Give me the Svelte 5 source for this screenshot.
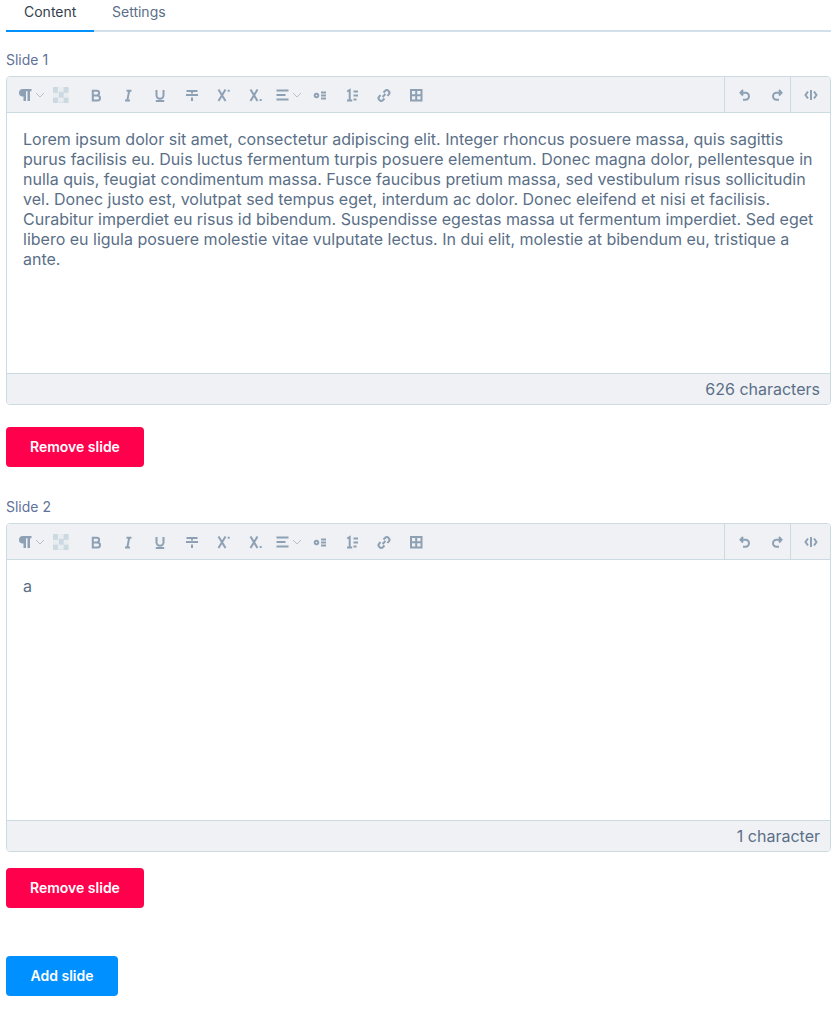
<script lang="ts">
  const lorem =
    'Lorem ipsum dolor sit amet, consectetur adipiscing elit. Integer rhoncus posuere massa, quis sagittis purus facilisis eu. Duis luctus fermentum turpis posuere elementum. Donec magna dolor, pellentesque in nulla quis, feugiat condimentum massa. Fusce faucibus pretium massa, sed vestibulum risus sollicitudin vel. Donec justo est, volutpat sed tempus eget, interdum ac dolor. Donec eleifend et nisi et facilisis. Curabitur imperdiet eu risus id bibendum. Suspendisse egestas massa ut fermentum imperdiet. Sed eget libero eu ligula posuere molestie vitae vulputate lectus. In dui elit, molestie at bibendum eu, tristique a ante.'

  const slides = [
    { label: 'Slide 1', text: lorem, count: '626 characters' },
    { label: 'Slide 2', text: 'a', count: '1 character' },
  ]

  const formatIcons = [
    'M4.800 3.800h4a2.300 2.300 0 0 1 0 4.600h-4zM4.800 8.400h4.600a2.600 2.600 0 0 1 0 5.200H4.800z',
    'M6.500 3.800h5M5 13.600h5M9.200 3.800 7.300 13.600',
    'M4.500 3v5.200a3.500 3.500 0 0 0 7 0V3M3.800 14h8.400',
    'M2.500 4h11M2 8h12M8 4v2.500M8 10.500v3.500',
    'M2.500 2.500 9.500 14M9.500 2.500 2.500 14M11.700 3.800h2',
    'M2.500 2.500 9.500 14M9.500 2.500 2.500 14M11.700 13h2',
  ]
  const listIcons = [
    'M9 5.500h5M9 8.500h5M9 11.500h5M4.500 6.700a1.800 1.800 0 1 1-.01 0z',
    'M3.200 4.500 5.700 3v10.500M3 13.500h5.200M9.500 4.500h4.500M9.500 8.500h4.500M9.500 12.500h3',
    'M6.500 10 9.500 7M7.500 5.500 9 4a2.500 2.500 0 0 1 3.700 3.500L11.500 9M8.500 11.500 7 13a2.500 2.500 0 0 1-3.700-3.500L4.500 8',
    'M3 3h10.500v10.500H3zM8.200 3v10.500M3 8.200h10.500',
  ]
</script>

{#snippet icon(d: string)}
  <svg viewBox="0 0 16 16" width="16" height="16" aria-hidden="true">
    <path {d} />
  </svg>
{/snippet}

{#snippet chevron()}
  <svg class="chevron" viewBox="0 0 10 6" width="10" height="6" aria-hidden="true">
    <path d="M1 1l4 4 4-4" />
  </svg>
{/snippet}

<div class="page">
  <nav class="tabs">
    <span class="tab active">Content</span>
    <span class="tab">Settings</span>
  </nav>

  {#each slides as slide, i}
    <section class="slide" class:second={i === 1}>
      <div class="label">{slide.label}</div>
      <div class="editor">
        <div class="toolbar">
          <div class="tools">
            <span class="tool para">
              <svg class="solid" viewBox="0 0 16 16" width="16" height="16" aria-hidden="true">
                <path d="M6.500 2H5.800a3.800 3.800 0 0 0 0 7.600h.7V14h2.500V4.300h1.500V14H13V4.300h1.500V2z" />
              </svg>
              {@render chevron()}
            </span>
            <span class="checker" aria-hidden="true"></span>
            {#each formatIcons as d}
              <span class="tool">{@render icon(d)}</span>
            {/each}
            <span class="tool align">
              {@render icon('M1.500 3.500h12M1.500 8h9M1.500 12.500h12')}
              {@render chevron()}
            </span>
            {#each listIcons as d}
              <span class="tool">{@render icon(d)}</span>
            {/each}
          </div>
          <div class="group history">
            <span class="tool">{@render icon('M6 3 3.500 5.800 6 8.500M3.500 5.800h5a3.500 3.500 0 0 1 0 7H6')}</span>
            <span class="tool">{@render icon('M10 3l2.500 2.800L10 8.500M12.500 5.800h-5a3.500 3.500 0 0 0 0 7H10')}</span>
          </div>
          <div class="group source">
            <span class="tool">{@render icon('M5 4.500 2.500 8 5 11.500M11 4.500 13.500 8 11 11.500M8 3v10')}</span>
          </div>
        </div>
        <div class="body">{slide.text}</div>
        <div class="footer">{slide.count}</div>
      </div>
      <button class="btn danger">Remove slide</button>
    </section>
  {/each}

  <button class="btn primary add">Add slide</button>
</div>

<style>
  :global(body) {
    margin: 0;
    background: #fff;
  }

  .page {
    width: 825px;
    padding: 0 5px 13px 6px;
    font-family: Inter, 'Liberation Sans', sans-serif;
    color: #5a6f87;
  }

  .tabs {
    display: flex;
    height: 30px;
    border-bottom: 2px solid #d2e0ec;
  }

  .tab {
    height: 30px;
    padding: 0 18px;
    font-size: 14px;
    line-height: 24px;
    color: #5a6f87;
    box-sizing: border-box;
  }

  .tab.active {
    width: 88px;
    color: #333f4d;
    border-bottom: 2px solid #0090ff;
    height: 32px;
  }

  .slide {
    margin-top: 19px;
  }

  .slide.second {
    margin-top: 31px;
  }

  .label {
    font-size: 14px;
    line-height: 18px;
    height: 25px;
    color: #5f7299;
  }

  .editor {
    height: 329px;
    box-sizing: border-box;
    border: 1px solid #ccdae2;
    border-radius: 4px;
    display: flex;
    flex-direction: column;
    overflow: hidden;
  }

  .toolbar {
    height: 36px;
    flex: none;
    box-sizing: border-box;
    display: flex;
    background: #eff1f5;
    border-bottom: 1px solid #ccdae2;
  }

  .tools {
    flex: 1;
    display: flex;
    align-items: center;
    padding-left: 10px;
  }

  .group {
    display: flex;
    align-items: center;
    border-left: 1px solid #ccdae2;
  }

  .history {
    width: 66px;
    padding-left: 4px;
    box-sizing: border-box;
  }

  .source {
    width: 39px;
    justify-content: center;
  }

  .tool {
    width: 32px;
    height: 32px;
    flex: none;
    display: inline-flex;
    align-items: center;
    justify-content: center;
  }

  .tool svg {
    fill: none;
    stroke: #8ea1b4;
    stroke-width: 2;
  }

  .tool svg.solid {
    fill: #8ea1b4;
    stroke: none;
  }

  .tool svg.chevron {
    stroke: #b4c1cc;
    stroke-width: 1;
  }

  .para {
    width: 28px;
    justify-content: flex-start;
    gap: 2px;
  }

  .checker {
    width: 16px;
    height: 16px;
    flex: none;
    margin: 0 11px 0 8px;
    border-radius: 1px;
    background-color: #e8edf1;
    background-image: conic-gradient(transparent 25%, #ccd9e0 0 50%, transparent 0 75%, #ccd9e0 0);
    background-size: 10.67px 10.67px;
  }

  .align {
    width: 32px;
    gap: 1px;
  }

  .body {
    flex: 1;
    padding: 16px;
    font-size: 16px;
    line-height: 20px;
    color: #5a6f87;
  }

  .footer {
    height: 31px;
    flex: none;
    box-sizing: border-box;
    background: #eff1f5;
    border-top: 1px solid #ccdae2;
    padding-right: 10px;
    text-align: right;
    font-size: 16px;
    line-height: 30px;
    color: #5a6f87;
  }

  .btn {
    display: block;
    height: 40px;
    min-width: 112px;
    padding: 0 24px 2px;
    border: 0;
    border-radius: 4px;
    color: #fff;
    font-family: inherit;
    font-size: 14px;
    font-weight: 600;
  }

  .danger {
    background: #ff004d;
    margin-top: 22px;
  }

  .second .danger {
    margin-top: 16px;
  }

  .primary {
    background: #0090ff;
  }

  .add {
    margin-top: 48px;
  }
</style>
